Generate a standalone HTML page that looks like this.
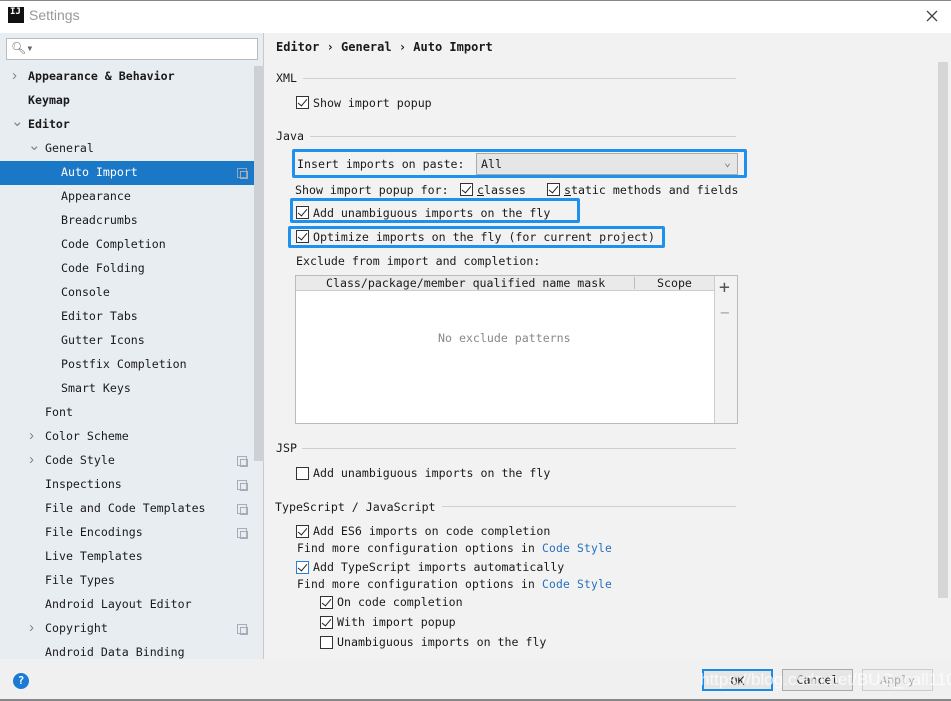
<!DOCTYPE html>
<html><head><style>
*{margin:0;padding:0;box-sizing:border-box}
body{width:951px;height:701px;overflow:hidden;background:#f2f2f2;font-family:"DejaVu Sans Mono","Liberation Mono",monospace;font-size:11.6px;color:#1a1a1a;position:relative}
.a{position:absolute;white-space:nowrap}
.cb{position:absolute;width:13px;height:13px;border:1px solid #333;background:#fff}
.cb.c::after{content:"";position:absolute;left:3px;top:0px;width:4px;height:8px;border:solid #222;border-width:0 1.3px 1.3px 0;transform:rotate(40deg)}
.hl{position:absolute;border:3px solid #1e90ee;border-radius:2px}
.sep{position:absolute;height:1px;background:#cfcfcf}
.side div{position:absolute;white-space:nowrap;height:24px;line-height:24px}
.ch{color:#888;font-family:"Liberation Sans",sans-serif;font-size:15px}
.cp{position:absolute;width:10px;height:10px;border:1px solid #aab;}
.cp::after{content:"";position:absolute;left:2px;top:2px;width:6px;height:6px;border:1px solid #aab}
.btn{position:absolute;height:22px;border:1px solid #aaa;background:#e6e6e6;text-align:center;line-height:20px}
</style></head><body>
<div class="a" style="left:0;top:0;width:951px;height:33px;background:#fff;border-top:1px solid #888"></div>
<div class="a" style="left:8px;top:7px;width:16px;height:16px;background:#111;color:#fff;font-size:9px;font-weight:bold;line-height:11px;padding-left:2px">IJ</div>
<div class="a" style="left:29px;top:7px;font-family:'Liberation Sans',sans-serif;font-size:14px;color:#999">Settings</div>
<svg class="a" style="left:926px;top:10px" width="12" height="12"><path d="M1 1L11 11M11 1L1 11" stroke="#444" stroke-width="1.3"/></svg>
<div class="a" style="left:0;top:33px;width:264px;height:626px;background:#e8edf2;border-right:1px solid #c9c9c9"></div>
<div class="a" style="left:6px;top:38px;width:252px;height:22px;background:#fff;border:1px solid #bbb"></div>
<div class="a" style="left:11px;top:41px;font-size:12px;color:#666">🔍︎▾</div>
<div class="a" style="left:254px;top:66px;width:10px;height:395px;background:#cdd1d6"></div>
<div class="a" style="left:0;top:161px;width:254px;height:24px;background:#1b78c7"></div>
<div class="side" style="position:absolute;left:0;top:64px">
<div class="ch" style="top:0;left:12px">›</div><div style="top:0;left:28px;font-weight:bold">Appearance &amp; Behavior</div>
<div style="top:24px;left:28px;font-weight:bold">Keymap</div>
<div class="ch" style="top:46px;left:11px">⌄</div><div style="top:48px;left:28px;font-weight:bold">Editor</div>
<div class="ch" style="top:70px;left:28px">⌄</div><div style="top:72px;left:45px">General</div>
<div style="top:96px;left:61px;color:#fff">Auto Import</div>
<div style="top:120px;left:61px">Appearance</div>
<div style="top:144px;left:61px">Breadcrumbs</div>
<div style="top:168px;left:61px">Code Completion</div>
<div style="top:192px;left:61px">Code Folding</div>
<div style="top:216px;left:61px">Console</div>
<div style="top:240px;left:61px">Editor Tabs</div>
<div style="top:264px;left:61px">Gutter Icons</div>
<div style="top:288px;left:61px">Postfix Completion</div>
<div style="top:312px;left:61px">Smart Keys</div>
<div style="top:336px;left:45px">Font</div>
<div class="ch" style="top:360px;left:29px">›</div><div style="top:360px;left:45px">Color Scheme</div>
<div class="ch" style="top:384px;left:29px">›</div><div style="top:384px;left:45px">Code Style</div>
<div style="top:408px;left:45px">Inspections</div>
<div style="top:432px;left:45px">File and Code Templates</div>
<div style="top:456px;left:45px">File Encodings</div>
<div style="top:480px;left:45px">Live Templates</div>
<div style="top:504px;left:45px">File Types</div>
<div style="top:528px;left:45px">Android Layout Editor</div>
<div class="ch" style="top:552px;left:29px">›</div><div style="top:552px;left:45px">Copyright</div>
<div style="top:576px;left:45px">Android Data Binding</div>
</div>
<div class="cp" style="left:237px;top:168px;border-color:#8ab"></div>
<div class="cp" style="left:237px;top:456px"></div><div class="cp" style="left:237px;top:480px"></div><div class="cp" style="left:237px;top:504px"></div><div class="cp" style="left:237px;top:528px"></div><div class="cp" style="left:237px;top:624px"></div>
<div class="a" style="left:938px;top:62px;width:10px;height:536px;background:#d6d6d6"></div>

<div class="a" style="left:276px;top:40px;font-weight:bold;font-size:12px">Editor › General › Auto Import</div>
<div class="a" style="left:276px;top:71px">XML</div><div class="sep" style="left:303px;top:78px;width:433px"></div>
<div class="cb c" style="left:296px;top:96px"></div><div class="a" style="left:313px;top:96px">Show import popup</div>
<div class="a" style="left:276px;top:129px">Java</div><div class="sep" style="left:310px;top:136px;width:426px"></div>
<div class="hl" style="left:292px;top:149px;width:455px;height:29px"></div>
<div class="a" style="left:297px;top:157px">Insert imports on paste:</div>
<div class="a" style="left:476px;top:153px;width:262px;height:22px;background:#e6e6e6;border:1px solid #aaa;padding:3px 4px">All<span style="position:absolute;right:6px;top:1px;color:#777">⌄</span></div>
<div class="a" style="left:295px;top:183px">Show import popup for:</div>
<div class="cb c" style="left:460px;top:183px"></div><div class="a" style="left:477px;top:183px"><u>c</u>lasses</div>
<div class="cb c" style="left:547px;top:183px"></div><div class="a" style="left:564px;top:183px"><u>s</u>tatic methods and fields</div>
<div class="hl" style="left:290px;top:198px;width:290px;height:25px"></div>
<div class="cb c" style="left:296px;top:206px"></div><div class="a" style="left:313px;top:206px">Add unambiguous imports on the fly</div>
<div class="hl" style="left:288px;top:226px;width:377px;height:22px"></div>
<div class="cb c" style="left:296px;top:230px"></div><div class="a" style="left:313px;top:230px">Optimize imports on the fly (for current project)</div>
<div class="a" style="left:296px;top:254px">Exclude from import and completion:</div>
<div class="a" style="left:295px;top:275px;width:443px;height:149px;background:#fff;border:1px solid #bbb"></div>
<div class="a" style="left:296px;top:276px;width:418px;height:15px;background:#eaeaea;border-bottom:1px solid #ccc"></div>
<div class="a" style="left:714px;top:276px;width:1px;height:147px;background:#ccc"></div>
<div class="a" style="left:715px;top:276px;width:22px;height:147px;background:#f2f2f2"></div>
<div class="a" style="left:634px;top:277px;width:1px;height:12px;background:#bbb"></div>
<div class="a" style="left:326px;top:276px">Class/package/member qualified name mask</div>
<div class="a" style="left:657px;top:276px">Scope</div>
<div class="a" style="left:719px;top:277px;font-size:18px;color:#555">+</div>
<div class="a" style="left:720px;top:303px;font-size:16px;color:#aaa">−</div>
<div class="a" style="left:438px;top:331px;color:#888">No exclude patterns</div>
<div class="a" style="left:276px;top:441px">JSP</div><div class="sep" style="left:302px;top:448px;width:434px"></div>
<div class="cb" style="left:296px;top:467px"></div><div class="a" style="left:313px;top:466px">Add unambiguous imports on the fly</div>
<div class="a" style="left:275px;top:500px">TypeScript / JavaScript</div><div class="sep" style="left:442px;top:506px;width:294px"></div>
<div class="cb c" style="left:296px;top:525px"></div><div class="a" style="left:313px;top:524px">Add ES6 imports on code completion</div>
<div class="a" style="left:297px;top:542px;font-size:11.3px;letter-spacing:0.2px">Find more configuration options in <span style="color:#2470c0">Code Style</span></div>
<div class="cb c" style="left:296px;top:561px;border-color:#2a7fd4"></div><div class="a" style="left:313px;top:560px">Add TypeScript imports automatically</div>
<div class="a" style="left:297px;top:578px;font-size:11.3px;letter-spacing:0.2px">Find more configuration options in <span style="color:#2470c0">Code Style</span></div>
<div class="cb c" style="left:320px;top:596px"></div><div class="a" style="left:337px;top:595px">On code completion</div>
<div class="cb c" style="left:320px;top:616px"></div><div class="a" style="left:337px;top:615px">With import popup</div>
<div class="cb" style="left:320px;top:636px"></div><div class="a" style="left:337px;top:635px">Unambiguous imports on the fly</div>

<div class="a" style="left:0;top:659px;width:951px;height:42px;background:#f0f0f0"></div>
<div class="a" style="left:0;top:699px;width:951px;height:2px;background:#888"></div>
<div class="a" style="left:13px;top:673px;width:16px;height:16px;border-radius:50%;background:#1a7ad4;color:#fff;font-size:11px;font-weight:bold;text-align:center;line-height:16px">?</div>
<div class="btn" style="left:702px;top:669px;width:71px;border:2px solid #1e88e5">OK</div>
<div class="btn" style="left:782px;top:669px;width:71px">Cancel</div>
<div class="btn" style="left:862px;top:669px;width:71px;color:#aaa;background:#eee;border-color:#ccc">Apply</div>
<div class="a" style="left:700px;top:670px;font-family:'Liberation Sans';font-size:17px;color:rgba(255,255,255,0.75)">https://blog.csdn.net/BUG_call110</div>
</body></html>
